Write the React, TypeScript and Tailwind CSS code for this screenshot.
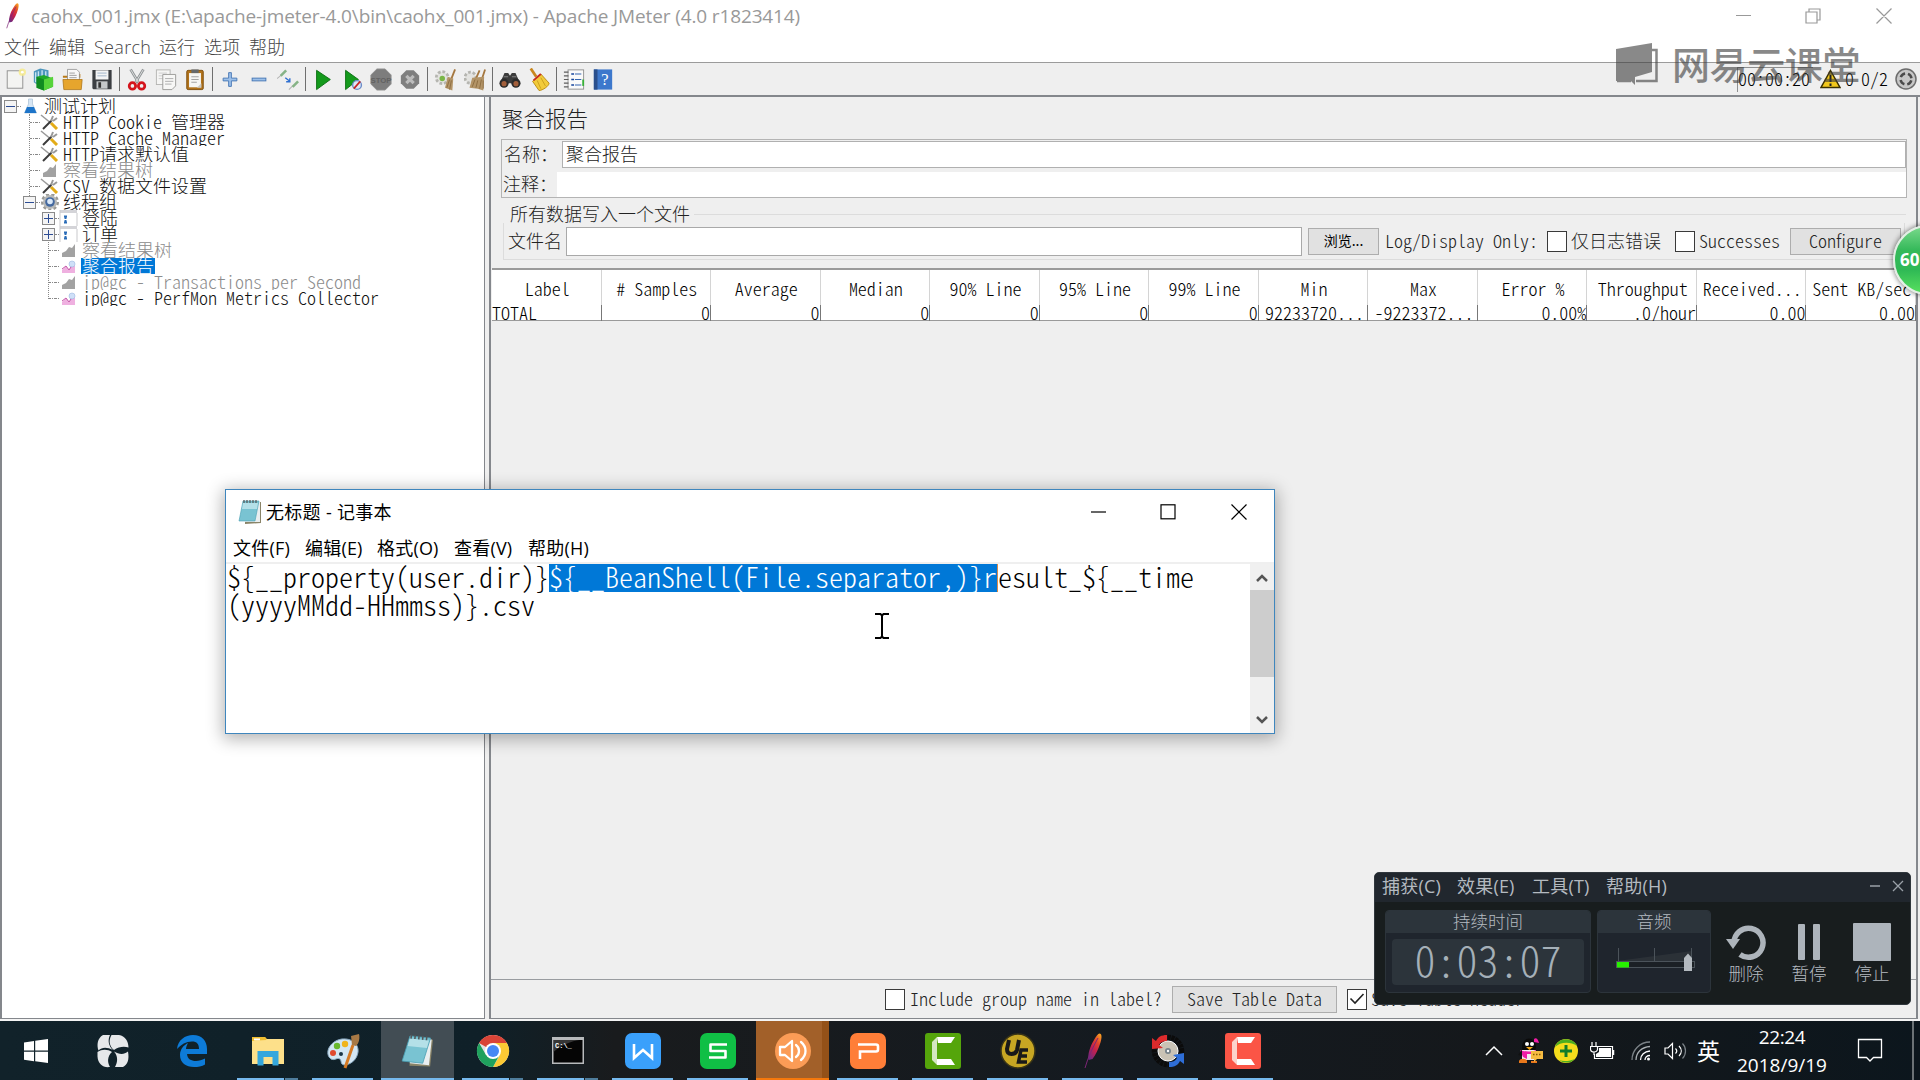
import React from "react";

type IconProps = { className?: string };

/* Text in the song-style monospaced face: half-width latin, full-width ideographs. */
function Song({ children, className = "" }: { children: string; className?: string }) {
  return (
    <span className={`inline-block whitespace-pre font-['Noto_Sans_CJK_SC',sans-serif] font-light [font-feature-settings:'hwid'] ${className}`}>
      <span className="relative -top-[0.08em]">{children}</span>
    </span>
  );
}

function Feather({ className }: IconProps) {
  return (
    <svg className={className} viewBox="0 0 20 36">
      <defs>
        <linearGradient id="fth" x1="0.8" y1="0" x2="0.2" y2="1">
          <stop offset="0" stopColor="#f79a23" />
          <stop offset="0.3" stopColor="#e0442c" />
          <stop offset="0.6" stopColor="#c4204e" />
          <stop offset="1" stopColor="#6d2a80" />
        </linearGradient>
      </defs>
      <path d="M16.500 0.5c2.500 0 2.500 4 1 9C15.500 16 12.500 22 9.500 26L5.500 27C4.500 22 7 13 11 7c2-3.500 4-6.500 5.500-6.500Z" fill="url(#fth)" />
      <path d="M15 5C10 14 5 24 2 35" fill="none" stroke="#7d2577" strokeWidth="1" />
    </svg>
  );
}

/* ------------------------------- toolbar icons ------------------------------- */

const toolIcons: Record<string, React.ReactNode> = {
  file: (
    <>
      <rect x="3.500" y="2.500" width="17" height="19" fill="#f4f4f2" stroke="#8d8d8d" />
      <circle cx="20" cy="4" r="4" fill="#f7eb8c" opacity=".85" />
      <circle cx="20" cy="4" r="1.500" fill="#fff" />
    </>
  ),
  templates: (
    <>
      <path d="M2 3 9 0l9 2v13l-10 4-6-4z" fill="#4d96bd" />
      <path d="M4 4v11M7 3v14M11 2v10M15 3v8" stroke="#c9e4f1" strokeWidth="1.500" />
      <path d="m5 9 8-2 10 4v9l-10 4-8-3z" fill="#20a92b" />
      <path d="m13 12 10-3v11l-10 4z" fill="#57d33a" />
      <path d="m5 9 8 3v12l-8-3z" fill="#118b21" />
    </>
  ),
  open: (
    <>
      <path d="M1 8h8l2-2h9v4H1z" fill="#b97a17" />
      <path d="M6 1h10l3 3v11H6z" fill="#f8f8f8" stroke="#888" strokeWidth=".8" />
      <path d="M8 5h6M8 7.500h8M8 10h8" stroke="#999" />
      <path d="M1 12h21l-1 11H2z" fill="#e6a52d" stroke="#aa7012" strokeWidth=".8" />
    </>
  ),
  save: (
    <>
      <path d="M1.500 1.500h21v21h-20l-1-1z" fill="#3b3e42" />
      <rect x="5" y="2" width="14" height="10" fill="#f3f4f5" />
      <path d="M7 5h10M7 8h10" stroke="#9cb1c8" />
      <rect x="6" y="14" width="12" height="8" fill="#c5c8ca" />
      <rect x="8" y="15" width="3" height="6" fill="#333" />
    </>
  ),
  cut: (
    <>
      <path d="M5 1 14 16M19 1 10 16" stroke="#8e9294" strokeWidth="3" />
      <path d="M5 1 14 16M19 1 10 16" stroke="#e0e2e2" strokeWidth="1" />
      <ellipse cx="7" cy="19" rx="3.500" ry="3.500" fill="none" stroke="#d4141c" strokeWidth="3" />
      <ellipse cx="17" cy="19" rx="3.500" ry="3.500" fill="none" stroke="#d4141c" strokeWidth="3" />
    </>
  ),
  copy: (
    <>
      <rect x="1.500" y="1.500" width="15" height="16" fill="#f5f5f4" stroke="#b4b4b2" />
      <path d="M4 5h9M4 8h9M4 11h9" stroke="#c9c9c9" />
      <path d="M8.500 6.500h14V19l-4 4h-10z" fill="#f7f7f6" stroke="#989896" />
      <path d="M11 11h9M11 14h9M11 17h7" stroke="#aaa" />
    </>
  ),
  paste: (
    <>
      <rect x="3" y="2" width="18" height="21" rx="1.500" fill="#b1731b" stroke="#7d4d0c" />
      <rect x="5.500" y="5" width="13" height="15.500" fill="#f6f6f4" />
      <path d="M8 1h8v4H8z" fill="#66696b" />
      <path d="M8 9h8M8 12h8M8 15h6" stroke="#9b9b9b" />
      <path d="m14 21 5-5v5z" fill="#c9c9c5" />
    </>
  ),
  plus: <path d="M10.500 4.500h3v6h6v3h-6v6h-3v-6h-6v-3h6z" fill="#9cc0ea" stroke="#4576b4" />,
  minus: <rect x="4.500" y="10.500" width="15" height="3" fill="#9cc0ea" stroke="#4576b4" />,
  toggle: (
    <>
      <path d="m0 11 5-4M13 23l4-4" stroke="#b5b5b5" strokeWidth="1.200" />
      <path d="m4 8 6-6" stroke="#86b386" strokeWidth="2.800" />
      <path d="m17 20 6-6" stroke="#86b386" strokeWidth="2.800" />
      <path d="m9 10 5 4m0-3.500v4h-4" fill="none" stroke="#2e6fd0" strokeWidth="1.500" />
    </>
  ),
  start: <path d="M5 2 20 12 5 23z" fill="#149a1c" stroke="#0b6f13" />,
  nopause: (
    <>
      <path d="M5 2 19 12 5 23z" fill="#149a1c" stroke="#0b6f13" />
      <circle cx="17.500" cy="18" r="4.800" fill="#dfe7f7" stroke="#6b8cc9" strokeWidth="1.500" />
      <path d="m14 22 7-8" stroke="#c92222" strokeWidth="1.800" />
    </>
  ),
  stop: (
    <>
      <path d="M7.500.5h9l6.500 6.500v10l-6.500 6.500h-9L1 17V7z" fill="#7d7d7d" stroke="#8f8f8f" />
      <text x="12" y="15.500" textAnchor="middle" fontSize="8.500" fontWeight="700" fontFamily="Liberation Sans" fill="#626262">STOP</text>
    </>
  ),
  shutdown: (
    <>
      <path d="M8 2h8l6 6v8l-6 6H8l-6-6V8z" fill="#7f7f7f" />
      <path d="m8 8 8 8m0-8-8 8" stroke="#bcbcbc" strokeWidth="3.500" />
    </>
  ),
  clear: (
    <>
      <circle cx="9" cy="10" r="6.500" fill="#e3e3e0" stroke="#b5b5b0" strokeWidth="3" strokeDasharray="3 2" />
      <circle cx="9" cy="11" r="3" fill="#7ab648" />
      <path d="m23 1-4 10" stroke="#a5773f" strokeWidth="2" />
      <path d="m15 9 6 2-1 13-8-3z" fill="#b39467" />
      <path d="m17 12-3 9m5-8-2 10" stroke="#8b6b40" />
    </>
  ),
  clearAll: (
    <>
      <circle cx="7" cy="10" r="6" fill="#e3e3e0" stroke="#b5b5b0" strokeWidth="3" strokeDasharray="3 2" />
      <path d="m23 1-3 9M17 2l-4 9" stroke="#a5773f" strokeWidth="2" />
      <path d="m9 10 13-1-1 15-6-2-9-1z" fill="#b39467" />
      <path d="m12 12-3 8m6-7-2 8m6-9-2 10m4-9v9" stroke="#8b6b40" />
    </>
  ),
  binoculars: (
    <>
      <path d="M6 5h4l2 3 2-3h4l5 11H1z" fill="#3c3c3c" />
      <circle cx="5.500" cy="16" r="5" fill="#2c2c2c" />
      <circle cx="18.500" cy="16" r="5" fill="#2c2c2c" />
      <circle cx="5.500" cy="16.500" r="2.800" fill="#a35f3b" />
      <circle cx="18.500" cy="16.500" r="2.800" fill="#a35f3b" />
      <path d="M5 9h5m4 0h5" stroke="#888" />
    </>
  ),
  broom: (
    <>
      <path d="m3 0 6 9" stroke="#c9871e" strokeWidth="3" />
      <path d="m5 14 9-8 9 10c0 3-7 8-11 8z" fill="#f2cb3a" stroke="#b98a12" />
      <path d="m6 13 8-7" stroke="#c62a20" strokeWidth="2" />
      <path d="m10 13 4 9m0-12 5 9" stroke="#c99e1c" />
    </>
  ),
  list: (
    <>
      <rect x="5.500" y="1.500" width="17" height="21" fill="#fafafa" stroke="#8f8f8f" />
      <path d="M1 4h5M1 8h5M1 12h5M1 16h5M1 20h5" stroke="#5e5e5e" strokeWidth="1.200" />
      <path d="M9 6h3M9 12h3M9 18h3" stroke="#17469d" strokeWidth="1.600" />
      <path d="M13 6h7M13 12h7M13 18h7" stroke="#3465b0" strokeWidth="1.300" />
      <path d="M22 12v7" stroke="#38b038" strokeWidth="2" />
    </>
  ),
  help: (
    <>
      <path d="M2 1h20v22H2z" fill="#3d78cc" />
      <path d="M2 1h4v22H2z" fill="#2a4f8c" />
      <text x="14" y="18" textAnchor="middle" fontSize="18" fontFamily="Liberation Serif" fill="#fff">?</text>
    </>
  ),
};

function Tool({ name, ml }: { name: string; ml: string }) {
  return (
    <svg viewBox="0 0 24 24" className={`h-[23px] w-[22px] shrink-0 ${ml}`}>
      {toolIcons[name]}
    </svg>
  );
}

function Sep({ ml }: { ml: string }) {
  return <span className={`h-6 w-px shrink-0 bg-[#6f6f6f] ${ml}`} />;
}

function Toolbar() {
  return (
    <div className="flex h-[32px] shrink-0 items-center bg-[#efefef]">
      <Tool name="file" ml="ml-[4px]" />
      <Tool name="templates" ml="ml-[6px]" />
      <Tool name="open" ml="ml-[8px]" />
      <Tool name="save" ml="ml-[7px]" />
      <Sep ml="ml-[6px]" />
      <Tool name="cut" ml="ml-[6px]" />
      <Tool name="copy" ml="ml-[7px]" />
      <Tool name="paste" ml="ml-[7px]" />
      <Sep ml="ml-[6px]" />
      <Tool name="plus" ml="ml-[6px]" />
      <Tool name="minus" ml="ml-[7px]" />
      <Tool name="toggle" ml="ml-[7px]" />
      <Sep ml="ml-[6px]" />
      <Tool name="start" ml="ml-[6px]" />
      <Tool name="nopause" ml="ml-[7px]" />
      <Tool name="stop" ml="ml-[7px]" />
      <Tool name="shutdown" ml="ml-[7px]" />
      <Sep ml="ml-[6px]" />
      <Tool name="clear" ml="ml-[6px]" />
      <Tool name="clearAll" ml="ml-[8px]" />
      <Sep ml="ml-[6px]" />
      <Tool name="binoculars" ml="ml-[6px]" />
      <Tool name="broom" ml="ml-[7px]" />
      <Sep ml="ml-[6px]" />
      <Tool name="list" ml="ml-[6px]" />
      <Tool name="help" ml="ml-[7px]" />
      <div className="ml-auto flex items-center pr-[3px]">
        <div className="flex h-[25px] w-[76px] items-center border-t border-l border-[#8f8f8f] text-[18px] leading-none text-black">
          <Song>00:00:20</Song>
        </div>
        <svg viewBox="0 0 21 20" className="ml-[7px] h-5 w-[21px]">
          <path d="M10.500 1.500 20 18.500H1z" fill="#f2c81c" stroke="#3c3200" strokeWidth="1.500" />
          <path d="M10.500 6v7M10.500 14.500v2.500" stroke="#222" strokeWidth="2" />
        </svg>
        <Song className="ml-[4px] text-[18px] leading-none text-black">0</Song>
        <Song className="ml-[7px] text-[18px] leading-none text-black">0/2</Song>
        <svg viewBox="0 0 22 22" className="ml-[7px] h-[22px] w-[22px]">
          <circle cx="11" cy="11" r="10" fill="#c7c7c7" stroke="#6c6c6c" strokeWidth="1.500" />
          <circle cx="11" cy="11" r="5.500" fill="none" stroke="#4b4b4b" strokeWidth="2.500" strokeDasharray="5.600 3" strokeDashoffset="-1.500" />
        </svg>
      </div>
    </div>
  );
}

/* --------------------------------- test tree --------------------------------- */

type Kind = "flask" | "tools" | "grayChart" | "gear" | "doc" | "chart";

function TreeIcon({ kind }: { kind: Kind }) {
  return (
    <svg viewBox="0 0 20 16" className="h-4 w-5 shrink-0">
      {kind === "flask" && (
        <>
          <path d="M7.500 1h4v5l4 9h-12l4-9z" fill="#d7e6f4" stroke="#a8c0d6" strokeWidth=".7" />
          <path d="m6 9h7l2.500 6h-12z" fill="#1d74c9" />
        </>
      )}
      {kind === "tools" && (
        <>
          <path d="m1 1 11 9" stroke="#999" strokeWidth="1.500" />
          <path d="m11 9 6 6" stroke="#e3ac18" strokeWidth="3" />
          <path d="m3 15 9-9" stroke="#3b3b3b" strokeWidth="2" />
          <path d="m11 7 2-5m0 5 4-3" stroke="#999" strokeWidth="2" />
        </>
      )}
      {kind === "grayChart" && <path d="M3 15V11l4-2 3-4 3 1 3-4v13z" fill="#a2a2a2" />}
      {kind === "gear" && (
        <>
          <circle cx="10" cy="8" r="7.500" fill="none" stroke="#9a9a96" strokeWidth="3" strokeDasharray="3 2.200" />
          <circle cx="10" cy="8" r="7" fill="#b9bab8" />
          <circle cx="10" cy="8" r="4.800" fill="#44699f" />
          <circle cx="10" cy="7.500" r="2.800" fill="#dbe9f8" />
        </>
      )}
      {kind === "doc" && (
        <>
          <path d="M1 0h17v3H1z" fill="#d4d4d8" />
          <path d="M1 0v16M18 3v13" stroke="#c9c9cc" />
          <path d="M5 6.500h3M5 12.500h3M6.500 6v7" stroke="#2a6cb8" strokeWidth="2" strokeDasharray="3 1" />
        </>
      )}
      {kind === "chart" && (
        <>
          <path d="M3 15V12l4-4 3 4 3-6 3 2v7z" fill="#efb0e0" />
          <path d="m3 11 4-3 3 4 4-6" fill="none" stroke="#c35aa8" />
          <circle cx="13" cy="6" r="3" fill="#cfe0f8" stroke="#9db8e0" strokeWidth=".6" />
        </>
      )}
    </svg>
  );
}

type Row = { level: 0 | 1 | 2; kind: Kind; text: string; exp?: "+" | "-"; tone?: "gray" | "selected" };

const rows: Row[] = [
  { level: 0, kind: "flask", text: "测试计划", exp: "-" },
  { level: 1, kind: "tools", text: "HTTP Cookie 管理器" },
  { level: 1, kind: "tools", text: "HTTP Cache Manager" },
  { level: 1, kind: "tools", text: "HTTP请求默认值" },
  { level: 1, kind: "grayChart", text: "察看结果树", tone: "gray" },
  { level: 1, kind: "tools", text: "CSV 数据文件设置" },
  { level: 1, kind: "gear", text: "线程组", exp: "-" },
  { level: 2, kind: "doc", text: "登陆", exp: "+" },
  { level: 2, kind: "doc", text: "订单", exp: "+" },
  { level: 2, kind: "grayChart", text: "察看结果树", tone: "gray" },
  { level: 2, kind: "chart", text: "聚合报告", tone: "selected" },
  { level: 2, kind: "grayChart", text: "jp@gc - Transactions per Second", tone: "gray" },
  { level: 2, kind: "chart", text: "jp@gc - PerfMon Metrics Collector" },
];

const indents = ["pl-[2px]", "pl-[21px]", "pl-[40px]"];

function TreeRow({ row }: { row: Row }) {
  const tone =
    row.tone === "gray" ? "text-[#8c8c8c]" : row.tone === "selected" ? "bg-[#0078d7] text-white" : "text-[#111]";
  return (
    <div className={`flex h-4 items-center ${indents[row.level]}`}>
      {row.exp ? (
        <span className="relative flex h-[13px] w-[13px] shrink-0 items-center justify-center border border-[#8a8a8a] bg-[#f4f4f4]">
          <span className="h-px w-[9px] bg-[#2c4c94]" />
          {row.exp === "+" && <span className="absolute h-[9px] w-px bg-[#2c4c94]" />}
        </span>
      ) : (
        <span className="ml-[7px] w-[6px] shrink-0 border-t border-dotted border-[#888]" />
      )}
      <span className="w-[4px] shrink-0 border-t border-dotted border-[#888]" />
      <TreeIcon kind={row.kind} />
      <span className={`ml-[2px] flex h-4 items-center overflow-hidden px-px text-[18px] leading-4 ${tone}`}>
        <Song>{row.text}</Song>
      </span>
    </div>
  );
}

function Tree() {
  return (
    <div className="relative w-[485px] shrink-0 border-r border-b border-l-2 border-[#84878c] bg-white pt-px">
      {rows.map((row, i) => (
        <TreeRow key={i} row={row} />
      ))}
      <span className="absolute top-[17px] left-[27px] h-[82px] border-l border-dotted border-[#888]" />
      <span className="absolute top-[145px] left-[46px] h-[57px] border-l border-dotted border-[#888]" />
    </div>
  );
}

/* ------------------------------- report panel ------------------------------- */

const columns: [string, string][] = [
  ["Label", "TOTAL"],
  ["# Samples", "0"],
  ["Average", "0"],
  ["Median", "0"],
  ["90% Line", "0"],
  ["95% Line", "0"],
  ["99% Line", "0"],
  ["Min", "92233720..."],
  ["Max", "-9223372..."],
  ["Error %", "0.00%"],
  ["Throughput", ".0/hour"],
  ["Received...", "0.00"],
  ["Sent KB/sec", "0.00"],
];

function CheckBox({ checked, className = "" }: { checked?: boolean; className?: string }) {
  return (
    <span className={`flex h-[21px] w-[20px] shrink-0 items-center justify-center border-[1.500px] border-[#3a3a3a] bg-white ${className}`}>
      {checked && (
        <svg viewBox="0 0 16 16" className="h-4 w-4">
          <path d="m1.500 7.500 4.500 4.500 8.500-9" fill="none" stroke="#222" strokeWidth="1.600" />
        </svg>
      )}
    </span>
  );
}

function Report() {
  return (
    <div className="flex min-w-0 flex-1 flex-col border-r-2 border-b border-l-2 border-[#84878c] bg-[#efefef] text-[18px] leading-none text-[#222]">
      <Song className="mt-[12px] ml-[11px] text-[21.5px] leading-[22px]">聚合报告</Song>
      <div className="mt-[8px] mr-[9px] ml-[10px] h-[59px] border border-[#b4b4b4]">
        <div className="flex h-[29px] items-center">
          <Song className="w-[60px] shrink-0 pl-[2px]">名称：</Song>
          <div className="flex h-[27px] flex-1 items-center border border-[#b0b0b0] bg-white pl-[3px]">
            <Song>聚合报告</Song>
          </div>
        </div>
        <div className="mt-[3px] flex h-[25px] items-center">
          <Song className="w-[55px] shrink-0 pl-px">注释：</Song>
          <div className="h-full flex-1 bg-white" />
        </div>
      </div>
      <div className="mt-[7px] flex h-[18px] items-center pr-[10px] pl-[12px]">
        <span className="mr-[3px] w-[4px] self-stretch" />
        <Song className="mr-[4px]">所有数据写入一个文件</Song>
        <span className="h-px flex-1 bg-[#dcdcdc]" />
      </div>
      <div className="mr-[11px] ml-[12px] flex h-[37px] items-center border-r border-b border-l border-[#dcdcdc]">
        <Song className="w-[62px] shrink-0 pl-[4px]">文件名</Song>
        <div className="h-[29px] w-[736px] shrink-0 border border-[#a9a9a9] bg-white" />
        <div className="ml-[6px] flex h-[27px] w-[71px] shrink-0 items-center justify-center border border-[#adadad] bg-[#e1e1e1] font-['Noto_Sans_CJK_SC',sans-serif] text-[14px] text-black">
          <span className="relative -top-px">浏览...</span>
        </div>
        <Song className="ml-[6px]">Log/Display Only:</Song>
        <CheckBox className="ml-[9px]" />
        <Song className="ml-[4px]">仅日志错误</Song>
        <CheckBox className="ml-[14px]" />
        <Song className="ml-[4px]">Successes</Song>
        <div className="ml-[10px] flex h-[27px] w-[111px] shrink-0 items-center justify-center border border-[#adadad] bg-[#e1e1e1]">
          <Song>Configure</Song>
        </div>
      </div>
      <div className="mt-[8px] ml-px grid h-[53px] shrink-0 grid-cols-13 grid-rows-[35px_16px] border-t-2 border-b border-[#9a9a9a] bg-white text-black">
        {columns.map(([head]) => (
          <div key={head} className="flex items-center justify-center overflow-hidden border-r border-[#d4d4d4] pt-1 pl-[2px]">
            <Song>{head}</Song>
          </div>
        ))}
        {columns.map(([head, value], i) => (
          <div
            key={head}
            className={`flex items-center overflow-hidden border-r border-[#777] ${i === 0 ? "justify-start" : value.endsWith("...") ? "justify-center pl-[3px]" : "justify-end"}`}
          >
            <Song>{value}</Song>
          </div>
        ))}
      </div>
      <div className="flex-1 border-b border-[#999ca0]" />
      <div className="flex h-[38px] shrink-0 items-center pl-[394px]">
        <CheckBox />
        <Song className="ml-[5px]">Include group name in label?</Song>
        <div className="ml-[10px] flex h-[27px] w-[165px] items-center justify-center border border-[#adadad] bg-[#e1e1e1]">
          <Song>Save Table Data</Song>
        </div>
        <CheckBox checked className="ml-[10px]" />
        <Song className="ml-[4px]">Save Table Header</Song>
      </div>
    </div>
  );
}

/* --------------------------------- notepad ---------------------------------- */

function NotepadIcon({ className }: IconProps) {
  return (
    <svg className={className} viewBox="0 0 24 26">
      <path d="M7 4 23 3v21l-16 1z" fill="#8a8468" />
      <path d="M6 3h16v20H7z" fill="#e9eef0" />
      <path d="M5 2h16l-4 20H1z" fill="#79c3d2" stroke="#4a9fb4" strokeWidth=".6" />
      <path d="M5 4h15l-1 6H4z" fill="#b4e0e8" />
      <path d="M6 1v3m3-3v3m3-3v3m3-3v3m3-3v3" stroke="#555" strokeWidth="1.200" />
    </svg>
  );
}

const notepadMenu: [string, string][] = [
  ["文件(F)", "w-[72px]"],
  ["编辑(E)", "w-[72px]"],
  ["格式(O)", "w-[77px]"],
  ["查看(V)", "w-[74px]"],
  ["帮助(H)", "w-[72px]"],
];

function Notepad() {
  return (
    <div className="absolute top-[489px] left-[225px] flex h-[245px] w-[1050px] flex-col border border-[#3f86bd] bg-white font-['Open_Sans','Noto_Sans_CJK_SC',sans-serif] text-black shadow-[0_3px_16px_2px_rgba(0,0,0,0.3)]">
      <div className="flex h-[44px] shrink-0 items-center">
        <NotepadIcon className="ml-[12px] h-[26px] w-[24px]" />
        <span className="ml-[4px] text-[18px] tracking-[0.3px] whitespace-pre">无标题 - 记事本</span>
        <svg viewBox="0 0 156 16" className="mr-[27px] ml-auto h-4 w-[156px]" fill="none" stroke="#000" strokeWidth="1.200">
          <path d="M0 8h15" />
          <rect x="70" y=".8" width="14" height="14" />
          <path d="m140.500.5 15 15m0-15-15 15" />
        </svg>
      </div>
      <div className="flex h-[28px] shrink-0 items-center pl-[7px] text-[18px]">
        {notepadMenu.map(([label, w]) => (
          <span key={label} className={`${w} shrink-0 tracking-[0.2px] whitespace-nowrap`}>
            {label}
          </span>
        ))}
      </div>
      <div className="flex min-h-0 flex-1 border-t-2 border-[#efefef]">
        <div className="min-w-0 flex-1 text-[28px] leading-[28px]">
          <div className="flex h-[28px] pl-px">
            <Song>{"${__property(user.dir)}"}</Song>
            <span className="flex overflow-hidden border-r border-[#d98b4a] bg-[#0078d7] text-white">
              <Song>{"${__BeanShell(File.separator,)}r"}</Song>
            </span>
            <Song>{"esult_${__time"}</Song>
          </div>
          <div className="flex h-[28px] pl-px">
            <Song>{"(yyyyMMdd-HHmmss)}.csv"}</Song>
          </div>
        </div>
        <div className="flex w-[24px] shrink-0 flex-col items-center bg-[#f0f0f0]">
          <svg viewBox="0 0 12 8" className="mt-[10px] h-2 w-3" fill="none" stroke="#555" strokeWidth="2.500">
            <path d="m1 7 5-5 5 5" />
          </svg>
          <span className="mt-[8px] h-[87px] w-full bg-[#cdcdcd]" />
          <svg viewBox="0 0 12 8" className="mt-auto mb-[9px] h-2 w-3" fill="none" stroke="#555" strokeWidth="2.500">
            <path d="m1 1 5 5 5-5" />
          </svg>
        </div>
      </div>
    </div>
  );
}

/* --------------------------------- recorder --------------------------------- */

function Recorder() {
  return (
    <div className="absolute top-[872px] left-[1374px] flex h-[133px] w-[537px] flex-col overflow-hidden rounded-[5px] border border-[#30373d] bg-[#181d1e] text-[#b4bac0]">
      <div className="flex h-[29px] shrink-0 items-center bg-[#21272e] pb-[3px] pl-[7px] font-['Open_Sans','Noto_Sans_CJK_SC',sans-serif] text-[18px] tracking-[0.2px]">
        <span className="w-[75px]">捕获(C)</span>
        <span className="w-[75px]">效果(E)</span>
        <span className="w-[74px]">工具(T)</span>
        <span className="w-[74px]">帮助(H)</span>
        <svg viewBox="0 0 34 12" className="mr-[6px] ml-auto h-3 w-[34px]" fill="none" stroke="#9aa1a8" strokeWidth="1.300">
          <path d="M0 6h10M23 1l10 10m0-10L23 11" />
        </svg>
      </div>
      <div className="flex flex-1 pt-[8px] pl-[10px] text-[17.500px] leading-none">
        <div className="h-[83px] w-[206px] shrink-0 overflow-hidden rounded-[4px] border border-[#2c343b] bg-[#1f252d]">
          <div className="flex h-[22px] items-center justify-center bg-[#2c343b]">
            <Song>持续时间</Song>
          </div>
          <div className="mx-[6px] mt-[6px] flex h-[46px] items-center justify-center rounded-[4px] bg-[#2c343b] text-[42px] text-[#a5b0b8]">
            <Song>0:03:07</Song>
          </div>
        </div>
        <div className="ml-[6px] h-[83px] w-[114px] shrink-0 overflow-hidden rounded-[4px] border border-[#2c343b] bg-[#1f252d]">
          <div className="flex h-[22px] items-center justify-center bg-[#2c343b]">
            <Song>音频</Song>
          </div>
          <svg viewBox="0 0 80 26" className="mt-[14px] ml-[18px] h-[26px] w-[80px]">
            <path d="M1 14 76 4v10z" fill="#2b3137" />
            <path d="M2.500 1v13M38.500 1v13M75.500 1v13" stroke="#4b535a" />
            <rect x=".5" y="14.500" width="78" height="6" fill="#1b2025" stroke="#4b535a" />
            <rect x="1" y="15" width="12" height="5.500" fill="#27f000" />
            <path d="M68 11l4-4.500 4 4.500v13h-8z" fill="#b4bac0" />
          </svg>
        </div>
        <div className="ml-[14px] flex pt-[13px]">
          <div className="flex w-[42px] flex-col items-center">
            <svg viewBox="0 0 40 38" className="h-[38px] w-[40px]">
              <path d="M8 20A14.500 14.500 0 1 1 14 31.500" fill="none" stroke="#adb4bb" strokeWidth="5.500" />
              <path d="M0 16h14l-7 10z" fill="#adb4bb" />
            </svg>
            <Song className="mt-[4px]">删除</Song>
          </div>
          <div className="ml-[21px] flex w-[42px] flex-col items-center">
            <div className="flex h-[38px] items-center gap-[8px]">
              <span className="h-[36px] w-[7px] rounded-[1px] bg-[#adb4bb]" />
              <span className="h-[36px] w-[7px] rounded-[1px] bg-[#adb4bb]" />
            </div>
            <Song className="mt-[4px]">暂停</Song>
          </div>
          <div className="ml-[21px] flex w-[42px] flex-col items-center">
            <span className="h-[38px] w-[38px] rounded-[1px] bg-[#adb4bb]" />
            <Song className="mt-[4px]">停止</Song>
          </div>
        </div>
      </div>
    </div>
  );
}

/* ---------------------------------- taskbar --------------------------------- */

const taskIcons: Record<string, React.ReactNode> = {
  windows: <path d="M6 9.500 16 8v9.500H6zM17.200 7.800 30 6v11.500H17.200zM6 18.700h10v9.500L6 26.700zM17.200 18.700H30V30l-12.800-1.700z" fill="#fff" />,
  pinwheel: (
    <g fill="#e6e8ea">
      <path d="M8 2h7c-2.500 5-1.500 11 3 15C12 14 7 14 3.500 17.500 1.500 12 2.500 5 8 2z" />
      <path d="M16.500 2H24c6 1 9.500 6 9.500 12.500-4-1.500-10-1-14.500 2.500-5-4-5.500-10-2.500-15z" />
      <path d="M17 19c-4.500 4-5 10-2 15-7 1-12-3-12.500-10.500V19c4.500-3 10-3 14.500 0z" />
      <path d="M19 18.500c5 3 10 3.500 14 0 1.500 8-.5 13.500-5 15.500h-8c3-5 3-11-1-15.500z" />
    </g>
  ),
  edge: <path d="M3 16C4 7 11 2 19 2c9 0 14 6 14 14v5H13c.5 5 4 7 9 7 3 0 6-1 9-2.500v6C28 33.500 24 34 20 34 12 34 6 30 6 22c0-6 4-10 8-12-1 2-2 4-2 6h13c0-5-2-7.500-7-7.500-6 0-11 3-15 7.500z" fill="#0d7bd8" />,
  explorer: (
    <>
      <path d="M2 4h13l2 2v4H2z" fill="#f0bf32" />
      <rect x="4" y="6" width="7" height="2.500" fill="#fff" />
      <path d="M2 8l15-2h17v25H2z" fill="#fde08a" />
      <path d="M2 4h13l1.500 3L2 8z" fill="#f0bf32" />
      <rect x="4" y="5.500" width="6" height="1.800" fill="#fff" />
      <path d="M7.500 18h21v14.500h-6V24h-9v8.500h-6z" fill="#35a7dd" />
    </>
  ),
  paint: (
    <>
      <path d="M17 6c10-1 17 5 16 13-1 7-6 12-13 13-5 0-3-4-5-6-3-2-5 2-9 0C-1 21 4 8 17 6z" fill="#d3e6f3" stroke="#8fb0c8" />
      <circle cx="8" cy="20" r="3" fill="#e04a2f" />
      <circle cx="12" cy="13" r="3.200" fill="#68b82c" />
      <circle cx="20" cy="11" r="3.200" fill="#f0b41c" />
      <circle cx="16" cy="21" r="2" fill="#1b3445" />
      <path d="m20 35 8-23" stroke="#d67a24" strokeWidth="3" />
      <path d="m27 12-1-9 8-2c1 4 0 9-3 12z" fill="#a77945" />
    </>
  ),
  chrome: (
    <>
      <circle cx="18" cy="18" r="16" fill="#e2e2e2" />
      <path d="M18 18 4.100 10A16 16 0 0 1 31.900 10z" fill="#da4437" />
      <path d="M18 10h13.900A16 16 0 0 1 18 34l7-12z" fill="#fcc934" />
      <path d="M4.100 10A16 16 0 0 0 18 34l6.500-12H11z" fill="#1fa15d" />
      <circle cx="18" cy="18" r="8" fill="#fff" />
      <circle cx="18" cy="18" r="6" fill="#4688f4" />
    </>
  ),
  cmd: (
    <>
      <rect x="2" y="4" width="32" height="27" fill="#b8babc" />
      <rect x="3.500" y="7" width="29" height="22.500" fill="#050505" />
      <path d="M3.500 7h26c-8 1-18 5-26 12z" fill="#4a4a4a" opacity=".7" />
      <text x="5" y="15" fontSize="7" fontWeight="700" fontFamily="Liberation Mono" fill="#fff">C:\_</text>
    </>
  ),
  wpsW: (
    <>
      <rect width="36" height="36" rx="7" fill="#3aa0fb" />
      <path d="M9 11v14l9-8 9 8V11" fill="none" stroke="#fff" strokeWidth="2.600" />
    </>
  ),
  wpsS: (
    <>
      <rect width="36" height="36" rx="7" fill="#10bf45" />
      <path d="M27 11.500H10.500V18h15v6.500H9" fill="none" stroke="#fff" strokeWidth="2.600" strokeLinejoin="round" />
    </>
  ),
  sound: (
    <>
      <circle cx="18" cy="18" r="18" fill="#fb9c56" />
      <path d="M5 14v8h5l7 6V8l-7 6z" fill="none" stroke="#fff" strokeWidth="2.300" strokeLinejoin="round" />
      <path d="M21 12c4 3 4 9 0 12M26 9c6 5 6 13 0 18" fill="none" stroke="#fff" strokeWidth="2.300" strokeLinecap="round" />
    </>
  ),
  wpsP: (
    <>
      <rect width="36" height="36" rx="7" fill="#ff7e38" />
      <path d="M8 11.500h18q2 0 2 2v3q0 2-2 2H10V26" fill="none" stroke="#fff" strokeWidth="2.600" />
    </>
  ),
  camGreen: (
    <>
      <rect width="36" height="36" rx="3" fill="#55a50b" />
      <path d="M12 4h18l-4 6H13z" fill="#fff" />
      <path d="M7 9l5-5v28l-5-5z" fill="#d4e6c2" />
      <path d="M12 26h14l4 6H12z" fill="#fff" />
    </>
  ),
  ue: (
    <>
      <circle cx="18" cy="18" r="17" fill="#c7a623" stroke="#393417" strokeWidth="1.500" />
      <path d="M9 7 7 16q0 5 4.500 5T17 17l2-10" fill="none" stroke="#191919" strokeWidth="4" />
      <path d="M28 17h-7l-2.500 12H27m-6-6h6" fill="none" stroke="#191919" strokeWidth="3.500" />
    </>
  ),
  sync: (
    <>
      <circle cx="18" cy="18" r="13.500" fill="none" stroke="#0b0b0b" strokeWidth="5.500" strokeDasharray="3 .7" />
      <circle cx="18" cy="18" r="10" fill="#cac3b5" stroke="#fff" />
      <circle cx="18" cy="18" r="3" fill="#77838b" />
      <circle cx="18" cy="18" r="1.200" fill="#fff" />
      <path d="M17 2C11 2 8 4 6 8L2 5v11l11-1-4-3c2-3 4-4 8-4z" fill="#dc2a2c" />
      <path d="M19 34c6 0 9-2 11-6l4 3V20l-11 2 4 3c-2 3-4 4-8 4z" fill="#2e6ed8" />
    </>
  ),
  camRed: (
    <>
      <rect width="36" height="36" rx="3" fill="#fb5546" />
      <path d="M12 4h18l-4 6H13z" fill="#fff" />
      <path d="M7 9l5-5v28l-5-5z" fill="#fcd3cc" />
      <path d="M12 26h14l4 6H12z" fill="#fff" />
    </>
  ),
};

const tasks: { icon: string; look?: "active" | "orange" | "stack" }[] = [
  { icon: "explorer", look: "stack" },
  { icon: "paint" },
  { icon: "notepad", look: "active" },
  { icon: "chrome", look: "stack" },
  { icon: "cmd", look: "stack" },
  { icon: "wpsW" },
  { icon: "wpsS" },
  { icon: "sound", look: "orange" },
  { icon: "wpsP" },
  { icon: "camGreen" },
  { icon: "ue" },
  { icon: "feather" },
  { icon: "sync" },
  { icon: "camRed" },
];

function TaskGlyph({ icon }: { icon: string }) {
  if (icon === "notepad") return <NotepadIcon className="h-[34px] w-[31px] rotate-6" />;
  if (icon === "feather") return <Feather className="h-9 w-5" />;
  return (
    <svg viewBox="0 0 36 36" className="h-9 w-9">
      {taskIcons[icon]}
    </svg>
  );
}

function Taskbar() {
  return (
    <div className="flex h-[59px] shrink-0 bg-[linear-gradient(90deg,#11222a_0%,#0f2028_25%,#191b1d_32%,#141a20_60%,#15181b_78%,#0c161d_100%)] text-white">
      {["windows", "pinwheel", "edge"].map((icon, i) => (
        <div key={icon} className={`flex h-full items-center justify-center ${i === 0 ? "w-[72px]" : i === 1 ? "w-[81px]" : "w-[77px]"}`}>
          <TaskGlyph icon={icon} />
        </div>
      ))}
      {tasks.map(({ icon, look }) => (
        <div key={icon} className="flex h-full w-[75px] shrink-0 justify-center">
          <div
            className={`flex h-full w-[73px] flex-col items-center ${look === "active" ? "bg-[#424d54]" : look === "orange" ? "bg-[linear-gradient(90deg,#a26029_91%,#945118_91%)]" : ""}`}
          >
            <div className="flex flex-1 items-center pt-[2px]">
              <TaskGlyph icon={icon} />
            </div>
            {look === "orange" ? (
              <span className="h-[2px] w-full bg-[#f5780c]" />
            ) : look === "active" ? (
              <span className="h-[2px] w-full bg-[#76b9ed]" />
            ) : look === "stack" ? (
              <span className="flex h-[2px] w-[61px]">
                <span className="h-full w-[47px] bg-[#76b9ed]" />
                <span className="ml-px h-full flex-1 bg-[#4f7d9c]" />
              </span>
            ) : (
              <span className="h-[2px] w-[61px] bg-[#76b9ed]" />
            )}
          </div>
        </div>
      ))}
      <div className="ml-auto flex h-full items-center">
        <svg viewBox="0 0 18 12" className="h-3 w-[18px]" fill="none" stroke="#fff" strokeWidth="1.500">
          <path d="m1 10 8-8 8 8" />
        </svg>
        <svg viewBox="0 0 25 25" className="ml-[15px] h-[25px] w-[25px]">
          <ellipse cx="11" cy="9" rx="7" ry="8.500" fill="#0b0b0b" />
          <path d="M4 12h14v10H4z" fill="#f3e9ef" />
          <path d="M2 12c5 2 12 2 16 0v4H9v5L5 19z" fill="#f01ba5" />
          <path d="M16 1c2-2 4 0 5 4l-5-1z" fill="#f01ba5" />
          <circle cx="9" cy="6" r="2" fill="#fff" />
          <circle cx="14" cy="6" r="2" fill="#fff" />
          <path d="M8 9h7l-3.500 3z" fill="#f2a615" />
          <path d="M1 23c1-3 7-3 8 0v2H1zM13 25v-2h6v2z" fill="#e8781b" />
          <path d="M0 17 4 12v6z" fill="#111" />
          <path d="M13 13h12v8h-6l-3 3v-3h-3z" fill="#f7bc42" />
          <path d="M15 16.500h1.500m1.500 0h1.500m1.500 0h1.500" stroke="#8a5b00" strokeWidth="1.500" />
        </svg>
        <svg viewBox="0 0 24 24" className="ml-[11px] h-6 w-6">
          <circle cx="12" cy="12" r="12" fill="#f4dc1c" />
          <path d="M1 8A12 12 0 0 1 23 7C16 2 6 3 1 8zM5 21a12 12 0 0 0 16-1c-5 2-11 3-16 1z" fill="#4cae20" />
          <path d="M12 6v12M6 12h12" stroke="#137c2a" strokeWidth="3" />
        </svg>
        <svg viewBox="0 0 25 18" className="ml-[12px] h-[18px] w-[25px]">
          <path d="M7.500 4.500h15v12h-18V12" fill="none" stroke="#fff" strokeWidth="1.200" />
          <path d="M9 6h12v9H6v-3l3-2z" fill="#fff" />
          <path d="M23.500 8v5" stroke="#fff" strokeWidth="1.500" />
          <path d="M2 0v4m4-4v4M.5 4.500h7v3Q7 10 4 10T.5 7.500zM4 10v3" fill="none" stroke="#fff" strokeWidth="1.200" />
        </svg>
        <svg viewBox="0 0 20 20" className="ml-[16px] h-5 w-5" fill="none" strokeWidth="1.300">
          <path d="M1 19C1 9 9 1 19 1" stroke="#7b8287" />
          <path d="M5 19c0-8 6-13 14-13.500" stroke="#aab0b4" />
          <path d="M9.500 19c0-5 4-8.500 9.500-9M14 19c0-2.500 2-4.500 5-4.500" stroke="#fff" />
          <circle cx="17.500" cy="18" r="1.500" fill="#fff" />
        </svg>
        <svg viewBox="0 0 23 18" className="ml-[13px] h-[18px] w-[23px]" fill="none" stroke="#fff" strokeWidth="1.200">
          <path d="M1 6v6h3l4.500 4.500v-15L4 6z" />
          <path d="M11.500 6.500c1.500 1.500 1.500 3.500 0 5M15 4c3 3 3 7 0 10" />
          <path d="M18.500 1.500c4 4 4 11 0 15" stroke="#7b8287" />
        </svg>
        <span className="ml-[10px] font-['Noto_Sans_CJK_SC',sans-serif] text-[23px] leading-none">英</span>
        <div className="ml-[13px] flex w-[98px] flex-col items-center font-['Open_Sans',sans-serif] text-[19px] leading-[28px]">
          <span className="tracking-[-0.4px]">22:24</span>
          <span className="tracking-[0px]">2018/9/19</span>
        </div>
        <svg viewBox="0 0 26 26" className="ml-[26px] h-[26px] w-[26px]" fill="none" stroke="#fff" strokeWidth="1.300">
          <path d="M1.500 1.500h23v18h-8L13 23l-3.500-3.500h-8z" />
        </svg>
        <span className="mr-[6px] ml-[29px] h-full w-[2px] self-stretch bg-[#6b7276]" />
      </div>
    </div>
  );
}

const mainMenu = ["文件", "编辑", "Search", "运行", "选项", "帮助"];

export default function App() {
  return (
    <div className="relative flex h-[1080px] w-[1920px] flex-col overflow-hidden bg-white">
      <div className="flex h-[32px] shrink-0 items-center">
        <Feather className="ml-[4px] h-[26px] w-[17px]" />
        <span className="ml-[10px] font-['Open_Sans',sans-serif] text-[19px] tracking-[-0.13px] whitespace-nowrap text-[#999]">
          caohx_001.jmx (E:\apache-jmeter-4.0\bin\caohx_001.jmx) - Apache JMeter (4.0 r1823414)
        </span>
        <svg viewBox="0 0 156 16" className="mr-[28px] ml-auto h-4 w-[156px]" fill="none" stroke="#999" strokeWidth="1.200">
          <path d="M0 7.500h15M70 4h11v11H70zM73 4V1h11v11h-3M140.500.5l15 15m0-15-15 15" />
        </svg>
      </div>
      <div className="flex h-[30px] shrink-0 items-center gap-[9px] pl-[4px] font-['Open_Sans','Noto_Sans_CJK_SC',sans-serif] text-[18px] font-light text-[#444]">
        {mainMenu.map((m) => (
          <span key={m} className={m === "Search" ? "w-[56px] tracking-[0.3px]" : ""}>
            {m}
          </span>
        ))}
      </div>
      <div className="h-px shrink-0 bg-[#9b9b9b]" />
      <Toolbar />
      <div className="h-[2px] shrink-0 bg-[#84878c]" />
      <div className="flex min-h-0 flex-1 bg-[#efefef]">
        <Tree />
        <div className="w-[4px] shrink-0" />
        <Report />
        <div className="w-[2px] shrink-0" />
      </div>
      <div className="h-[2px] shrink-0 bg-[#f4f4f4]" />
      <Taskbar />

      <div className="absolute top-[40px] left-[1616px] flex items-center text-[#3c3c3c] opacity-60">
        <svg viewBox="0 0 42 46" className="h-[46px] w-[42px]" fill="currentColor">
          <path d="M0 9 36 3v29l-17 5v8l-5-5-14 1z" />
          <path d="M36 10h4.500v31H20m-5 0H1" fill="none" stroke="currentColor" strokeWidth="2.500" />
        </svg>
        <span className="ml-[14px] font-['Noto_Sans_CJK_SC',sans-serif] text-[38px] leading-[46px] font-medium tracking-[-0.4px]">网易云课堂</span>
      </div>

      <div className="absolute top-[225px] left-[1893px] flex h-[70px] w-[70px] items-center rounded-full border-2 border-[#e2eee4] bg-[linear-gradient(180deg,#79d98b_0%,#35b95a_35%,#2fb955_65%,#58e05f_100%)] pl-[5px] font-['Open_Sans',sans-serif] text-[17px] font-bold text-white shadow-[0_0_5px_1px_rgba(0,0,0,0.45)]">
        60
      </div>

      <Notepad />
      <svg viewBox="0 0 14 26" className="absolute top-[613px] left-[875px] h-[26px] w-[14px]" fill="none" stroke="#000" strokeWidth="2">
        <path d="M0 1h5.500L7 2.500 8.500 1H14M7 2v22M0 25h5.500L7 23.500 8.500 25H14" />
      </svg>
      <Recorder />
    </div>
  );
}
